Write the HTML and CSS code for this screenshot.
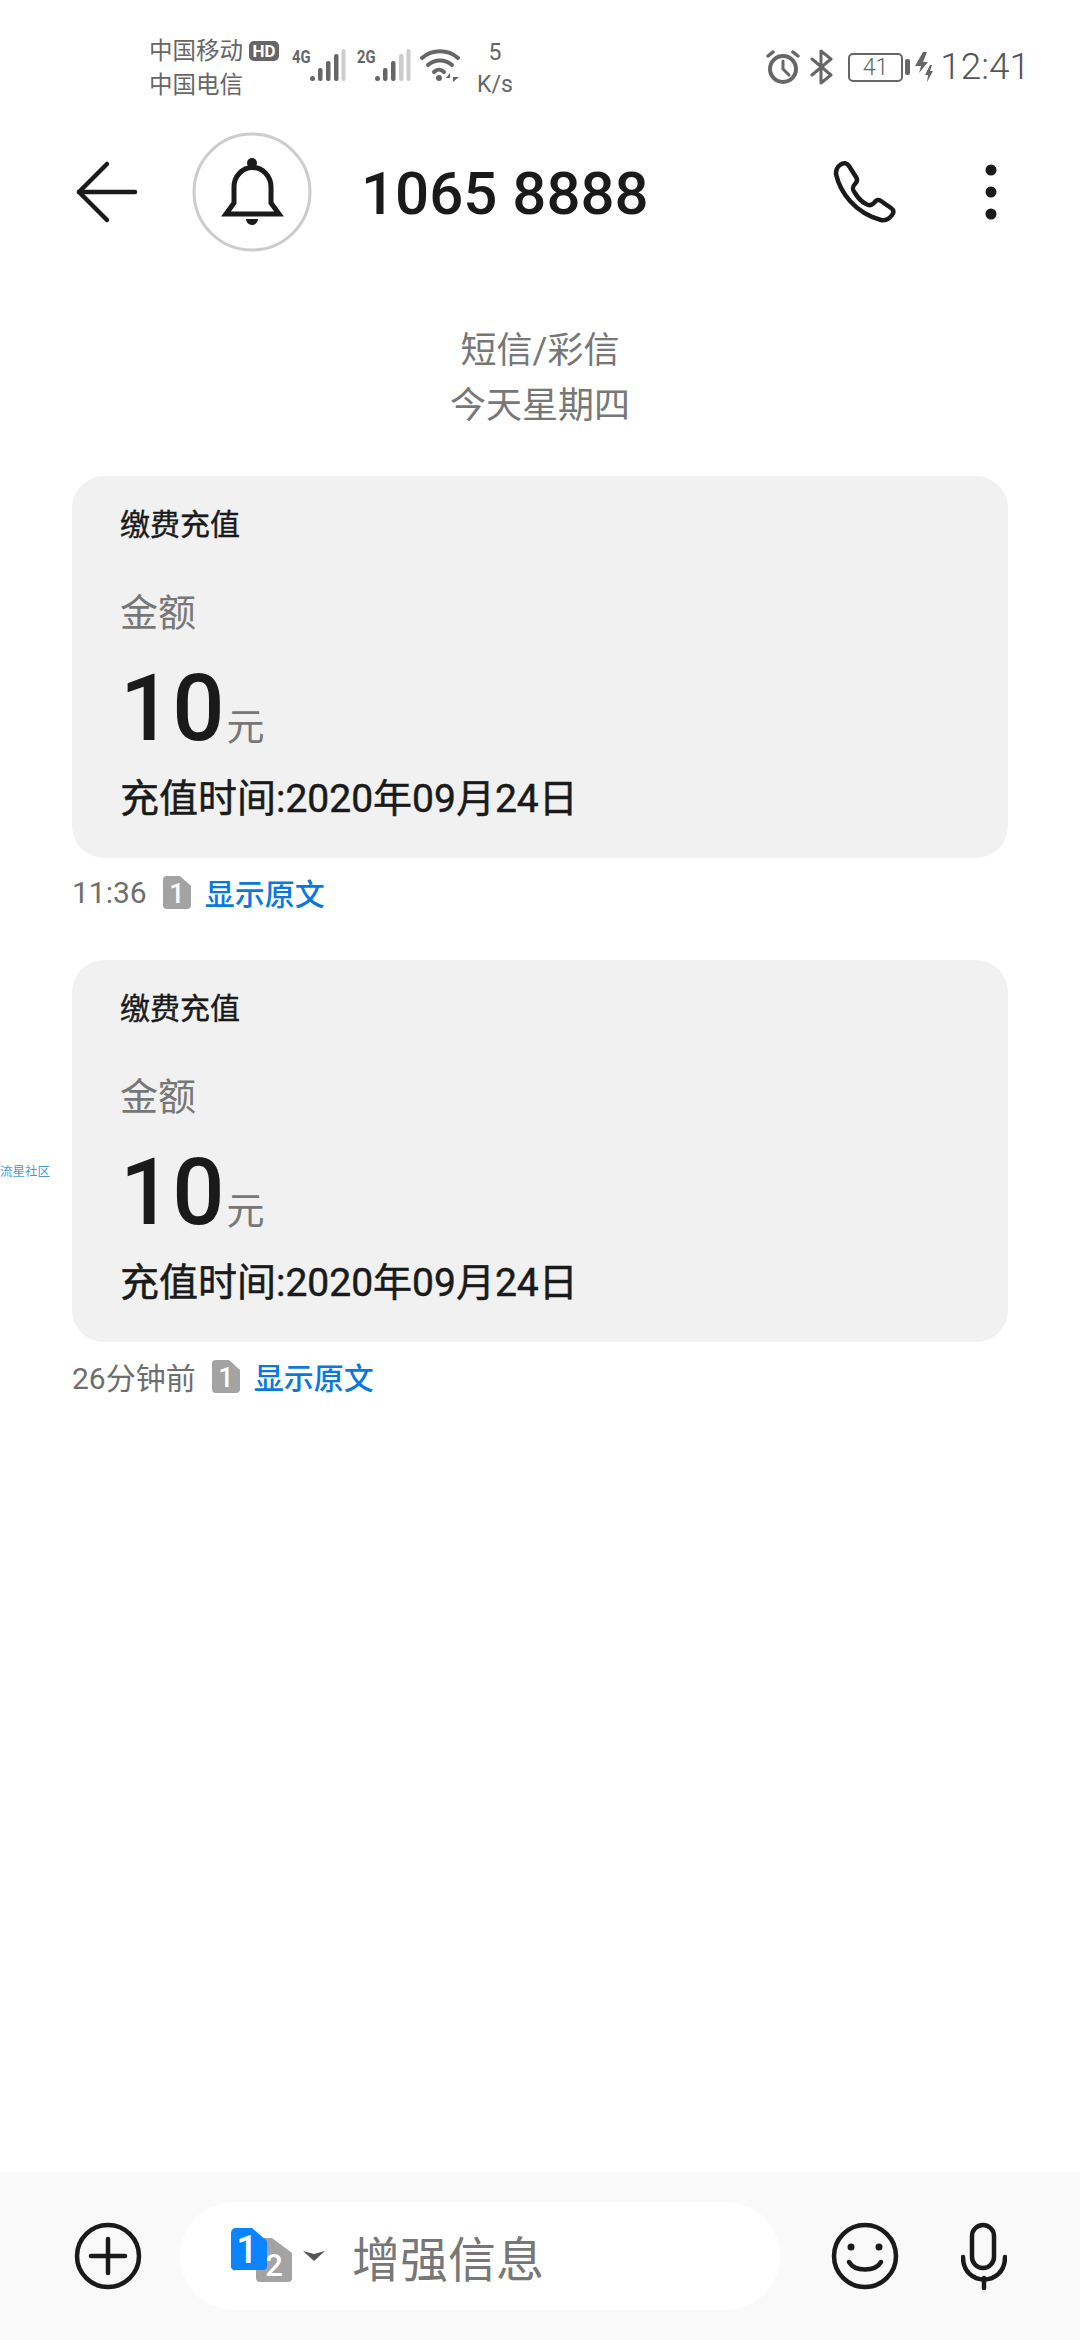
FILE: index.html
```html
<!DOCTYPE html>
<html lang="zh-CN">
<head>
<meta charset="utf-8">
<title>1065 8888</title>
<link rel="stylesheet" href="styles.css">
</head>
<body>
<div class="phone">
  <div class="status">
    <div class="carriers">
      <div class="carrier-line">中国移动<span class="hd">HD</span></div>
      <div class="carrier-line">中国电信</div>
    </div>
    <div class="net net-first">
      <span class="gen">4G</span>
      <svg class="bars" width="36" height="34" viewBox="0 0 36 34"><circle cx="2.5" cy="30.5" r="2.5" fill="#666"/><rect x="8" y="20" width="4.5" height="13" rx="2" fill="#666"/><rect x="16" y="13" width="4.5" height="20" rx="2" fill="#666"/><rect x="24" y="6" width="4.5" height="27" rx="2" fill="#666"/><rect x="31.5" y="1" width="4" height="32" rx="2" fill="#ccc"/></svg>
    </div>
    <div class="net net-second">
      <span class="gen">2G</span>
      <svg class="bars" width="36" height="34" viewBox="0 0 36 34"><circle cx="2.5" cy="30.5" r="2.5" fill="#666"/><rect x="8" y="20" width="4.5" height="13" rx="2" fill="#666"/><rect x="16" y="13" width="4.5" height="20" rx="2" fill="#666"/><rect x="24" y="6" width="4.5" height="27" rx="2" fill="#ccc"/><rect x="31.5" y="1" width="4" height="32" rx="2" fill="#ccc"/></svg>
    </div>
    <svg class="wifi" width="42" height="36" viewBox="0 0 42 36" fill="none" stroke="#666" stroke-width="4" stroke-linecap="round"><path d="M2 10C12 1 28 1 38 10"/><path d="M8 17C15 11 25 11 32 17"/><path d="M14 24C17 21 21 21 24 24"/><circle cx="19" cy="30" r="3" fill="#666" stroke="none"/><path d="M30 25L26 30H30V34ZM33 25V34L39 29H33Z" fill="#666" stroke="none"/></svg>
    <div class="speed"><span>5</span><span>K/s</span></div>
    <div class="status-right">
      <svg class="alarm" width="34" height="36" viewBox="0 0 34 36" fill="none" stroke="#666" stroke-linecap="round"><circle cx="17" cy="20" r="13" stroke-width="4"/><path d="M17 12V20L23 26" stroke-width="3"/><path d="M2 7L7 3M32 7L27 3" stroke-width="3.5"/></svg>
      <svg class="bt" width="24" height="36" viewBox="0 0 24 36" fill="none" stroke="#666" stroke-width="3" stroke-linecap="round" stroke-linejoin="round"><path d="M2 10L21 26L11 34V2L21 10L2 26"/></svg>
      <div class="battery"><span class="batt-num">41</span></div>
      <span class="nub"></span>
      <svg class="bolt" width="20" height="30" viewBox="0 0 20 30" fill="#666"><path d="M8 0L0 14H6L4 21L13 10H8L12 0Z"/><path d="M15 13L10 23H13L12 30L18 19H15L17 13Z"/></svg>
      <span class="clock">12:41</span>
    </div>
  </div>

  <header class="topbar">
    <svg class="back" width="72" height="64" viewBox="0 0 72 64" fill="none" stroke="#1a1a1a" stroke-width="4.5" stroke-linecap="round" stroke-linejoin="round"><path d="M37 4L9 32L37 60"/><path d="M9 32H65"/></svg>
    <div class="avatar">
      <svg width="120" height="120" viewBox="0 0 120 120" fill="none"><circle cx="60" cy="60" r="58" stroke="#ccc" stroke-width="3"/><circle cx="60" cy="31" r="5" fill="#1a1a1a"/><path d="M34 82L42 71V55A18.5 19.5 0 0 1 79 55V71L87 82Z" stroke="#1a1a1a" stroke-width="5"/><path d="M54 87H66A6 6 0 0 1 54 87Z" fill="#1a1a1a"/></svg>
    </div>
    <h1 class="title">1065 8888</h1>
    <svg class="call" width="64" height="64" viewBox="833 159 64 64" fill="none" stroke="#1a1a1a" stroke-width="4.5" stroke-linejoin="round"><path d="M840 164C844 161 847 162 849 165L856 176C858 179 857 181 855 183C852 186 852 188 855 192C858 197 862 201 866 203C869 205 872 204 874 202C876 199 878 198 881 200L891 207C894 209 894 212 892 214C889 218 885 220 881 219C870 216 858 209 850 200C842 191 838 182 836 173C836 169 837 166 840 164Z"/></svg>
    <svg class="more" width="12" height="56" viewBox="0 0 12 56" fill="#1a1a1a"><circle cx="6" cy="6" r="5.5"/><circle cx="6" cy="28" r="5.5"/><circle cx="6" cy="50" r="5.5"/></svg>
  </header>

  <main class="thread">
    <div class="thread-head">
      <div>短信/彩信</div>
      <div>今天星期四</div>
    </div>

    <article class="msg">
      <div class="card">
        <div class="card-title">缴费充值</div>
        <div class="card-label">金额</div>
        <div class="amount"><span class="amount-num">10</span><span class="amount-unit">元</span></div>
        <div class="card-date">充值时间:2020年09月24日</div>
      </div>
      <div class="meta">
        <span class="meta-time">11:36</span>
        <svg class="sim" width="28" height="33" viewBox="0 0 28 33"><path d="M4 0H17L28 10V29A4 4 0 0 1 24 33H4A4 4 0 0 1 0 29V4A4 4 0 0 1 4 0Z" fill="#a3a3a3"/><text x="14" y="27" text-anchor="middle" class="sim-num">1</text></svg>
        <a class="meta-link">显示原文</a>
      </div>
    </article>

    <article class="msg">
      <div class="card">
        <div class="card-title">缴费充值</div>
        <div class="card-label">金额</div>
        <div class="amount"><span class="amount-num">10</span><span class="amount-unit">元</span></div>
        <div class="card-date">充值时间:2020年09月24日</div>
      </div>
      <div class="meta">
        <span class="meta-time">26分钟前</span>
        <svg class="sim" width="28" height="33" viewBox="0 0 28 33"><path d="M4 0H17L28 10V29A4 4 0 0 1 24 33H4A4 4 0 0 1 0 29V4A4 4 0 0 1 4 0Z" fill="#a3a3a3"/><text x="14" y="27" text-anchor="middle" class="sim-num">1</text></svg>
        <a class="meta-link">显示原文</a>
      </div>
    </article>
  </main>

  <footer class="composer">
    <svg class="plus" width="68" height="68" viewBox="0 0 68 68" fill="none" stroke="#1a1a1a" stroke-linecap="round"><circle cx="34" cy="34" r="31" stroke-width="4.5"/><path d="M17 34H51M34 17V51" stroke-width="4.5"/></svg>
    <div class="input">
      <svg class="simpick" width="64" height="64" viewBox="0 -3 64 64"><path d="M30 11H41L61 26V51A4 4 0 0 1 57 55H29A4 4 0 0 1 25 51V20Z" fill="#a3a3a3"/><text x="43" y="49" text-anchor="middle" class="simpick-two">2</text><path d="M5 1H21L36 14V38A4 4 0 0 1 32 43H5A4 4 0 0 1 0 38V6A5 5 0 0 1 5 1Z" fill="#0a84ff"/><text x="16" y="36" text-anchor="middle" class="simpick-one">1</text></svg>
      <svg class="caret" width="22" height="10" viewBox="0 0 22 10"><path d="M0 0L11 3L22 0L11 10Z" fill="#555"/></svg>
      <span class="placeholder">增强信息</span>
    </div>
    <svg class="smile" width="68" height="68" viewBox="0 0 68 68" fill="none" stroke="#1a1a1a" stroke-width="4.5" stroke-linecap="round"><circle cx="34" cy="34" r="31"/><path d="M18 40C24 50 44 50 50 40"/><circle cx="20" cy="25" r="3.5" fill="#1a1a1a" stroke="none"/><circle cx="48" cy="25" r="3.5" fill="#1a1a1a" stroke="none"/></svg>
    <svg class="mic" width="46" height="68" viewBox="0 0 46 68" fill="none" stroke="#1a1a1a" stroke-width="4.5" stroke-linecap="round"><rect x="11" y="3" width="22" height="43" rx="11"/><path d="M2 35C2 65 44 65 44 35"/><path d="M23 56V66"/></svg>
  </footer>

  <div class="watermark">流星社区</div>
</div>
</body>
</html>
```
FILE: styles.css
```css
* { box-sizing: border-box; }
html, body { margin: 0; padding: 0; background: #fff; }
body { font-family: Roboto, "Noto Sans CJK SC", sans-serif; color: #1a1a1a; }
.phone { position: relative; width: 1080px; height: 2340px; display: flex; flex-direction: column; overflow: hidden; background: #fff; }

/* status bar */
.status { height: 132px; flex: none; display: flex; align-items: flex-start; padding: 30px 50px 0 149px; color: #666; }
.carriers { width: 134px; flex: none; margin-top: 4px; font-size: 23.5px; line-height: 34px; }
.carrier-line { display: flex; align-items: center; height: 34px; white-space: nowrap; }
.hd { margin-left: 6px; width: 30px; height: 20px; border-radius: 5px; background: #666; color: #fff; font-size: 17px; font-weight: 700; line-height: 20px; text-align: center; }
.net { flex: none; display: flex; align-items: flex-start; padding-top: 18px; }
.net-first { width: 62px; margin-left: 9px; }
.net-second { width: 62px; margin-left: 3px; }
.gen { width: 18px; font-size: 18px; font-weight: 700; line-height: 18px; transform: scaleX(.82); transform-origin: left; white-space: nowrap; }
.bars { flex: none; }
.wifi { flex: none; margin-left: 1px; margin-top: 18px; }
.speed { flex: none; width: 48px; margin-left: 9px; display: flex; flex-direction: column; align-items: center; font-size: 23px; line-height: 32px; margin-top: 7px; }
.status-right { margin-left: auto; margin-top: 6px; display: flex; align-items: center; height: 62px; }
.alarm { flex: none; }
.bt { flex: none; margin-left: 10px; }
.battery { width: 55px; height: 29px; margin-left: 14px; border: 2px solid #666; border-radius: 5px; display: flex; align-items: center; justify-content: center; }
.batt-num { font-size: 23px; font-weight: 300; line-height: 25px; }
.nub { width: 5px; height: 16px; margin-left: 2px; background: #666; border-radius: 2px; }
.bolt { flex: none; margin-left: 5px; }
.clock { margin-left: 5px; font-size: 37px; font-weight: 300; line-height: 40px; color: #555; }

/* header */
.topbar { height: 120px; flex: none; display: flex; align-items: center; padding-left: 70px; padding-right: 83px; }
.back { flex: none; }
.avatar { flex: none; width: 120px; height: 120px; margin-left: 50px; }
.avatar svg { display: block; }
.title { margin: 3px 0 0 49px; font-size: 60px; font-weight: 500; line-height: 70px; white-space: nowrap; color: #1a1a1a; }
.call { flex: none; margin-left: auto; }
.more { flex: none; margin-left: 88px; }

/* thread */
.thread { flex: 1; padding: 72px 72px 0; }
.thread-head { text-align: center; font-size: 36px; line-height: 55px; color: #777; margin-bottom: 42px; }
.msg { margin-bottom: 34px; }
.card { height: 382px; background: #f1f1f1; border-radius: 32px; padding: 28px 48px 0; }
.card-title { font-size: 30px; font-weight: 400; -webkit-text-stroke: 0.4px #1a1a1a; line-height: 42px; }
.card-label { margin-top: 42px; font-size: 38px; line-height: 50px; color: #777; }
.amount { margin-top: 23px; height: 96px; display: flex; align-items: baseline; line-height: 96px; }
.amount-num { font-size: 92px; font-weight: 500; }
.amount-unit { font-size: 38px; color: #777; margin-left: 2px; line-height: 38px; }
.card-date { margin-top: 17px; font-size: 39px; font-weight: 400; -webkit-text-stroke: 0.5px #1a1a1a; line-height: 50px; white-space: nowrap; }
.meta { height: 68px; display: flex; align-items: center; font-size: 30px; }
.meta-time { color: #6e6e6e; }
.sim { flex: none; margin-left: 16px; }
.sim-num { font-family: Roboto, sans-serif; font-size: 27px; font-weight: 500; fill: #fff; }
.meta-link { margin-left: 14px; color: #0a78dc; font-weight: 500; }

/* composer */
.composer { height: 168px; flex: none; background: #f9f9f9; display: flex; align-items: center; padding: 0 0 0 74px; }
.plus { flex: none; }
.input { flex: none; width: 600px; height: 108px; margin-left: 38px; border-radius: 54px; background: #fff; display: flex; align-items: center; padding-left: 51px; }
.simpick { flex: none; }
.simpick-one { font-family: Roboto, sans-serif; font-size: 38px; font-weight: 500; fill: #fff; }
.simpick-two { font-family: Roboto, sans-serif; font-size: 31px; font-weight: 500; fill: #fff; }
.caret { flex: none; margin-left: 8px; }
.placeholder { margin-left: 27px; font-size: 48px; color: #777; white-space: nowrap; }
.smile { flex: none; margin-left: 51px; }
.mic { flex: none; margin-left: 62px; }

.watermark { position: absolute; left: 0; top: 1164px; font-size: 12.5px; line-height: 16px; color: #4a9ad8; }
```
